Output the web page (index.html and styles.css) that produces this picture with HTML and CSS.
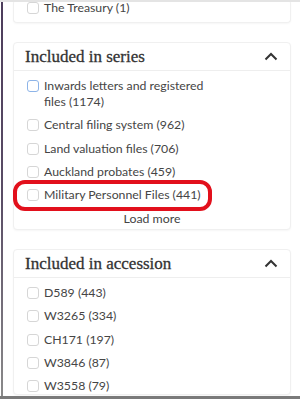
FILE: index.html
```html
<!DOCTYPE html>
<html>
<head>
<meta charset="utf-8">
<link rel="stylesheet" href="styles.css">
</head>
<body>
<div class="frame">
  <div class="edge"></div>
  <main class="page">
    <section class="card card-top">
      <ul class="list">
        <li class="item"><span class="box"></span><span>The Treasury (1)</span></li>
      </ul>
    </section>

    <section class="card">
      <header class="card-head">
        <h2>Included in series</h2>
        <svg class="chev" width="14" height="9" viewBox="0 0 14 9"><path d="M1.5 7.5 L7 2 L12.5 7.5" fill="none" stroke="#333" stroke-width="2"/></svg>
      </header>
      <ul class="list">
        <li class="item"><span class="box focus"></span><span>Inwards letters and registered files (1174)</span></li>
        <li class="item"><span class="box"></span><span>Central filing system (962)</span></li>
        <li class="item"><span class="box"></span><span>Land valuation files (706)</span></li>
        <li class="item"><span class="box"></span><span>Auckland probates (459)</span></li>
        <li class="item marked"><span class="box"></span><span>Military Personnel Files (441)</span></li>
      </ul>
      <div class="more">Load more</div>
    </section>

    <section class="card">
      <header class="card-head">
        <h2>Included in accession</h2>
        <svg class="chev" width="14" height="9" viewBox="0 0 14 9"><path d="M1.5 7.5 L7 2 L12.5 7.5" fill="none" stroke="#333" stroke-width="2"/></svg>
      </header>
      <ul class="list">
        <li class="item"><span class="box"></span><span>D589 (443)</span></li>
        <li class="item"><span class="box"></span><span>W3265 (334)</span></li>
        <li class="item"><span class="box"></span><span>CH171 (197)</span></li>
        <li class="item"><span class="box"></span><span>W3846 (87)</span></li>
        <li class="item"><span class="box"></span><span>W3558 (79)</span></li>
      </ul>
    </section>
  </main>
</div>
<div class="bottom-bar"></div>
</body>
</html>
```

FILE: styles.css
```css
html, body {
  margin: 0;
  padding: 0;
  background: #fff;
  height: 399px;
  overflow: hidden;
}
body {
  display: flex;
  flex-direction: column;
  border-top: 2px solid #e4e4e4;
  box-sizing: border-box;
  font-family: "Lato", "Liberation Sans", sans-serif;
}
.frame {
  flex: 1;
  display: flex;
  min-height: 0;
  overflow: hidden;
}
.edge {
  width: 2px;
  margin-left: 1px;
  background: linear-gradient(#4d3d5c 0%, #5a4d66 50%, #8a8a8a 100%);
}
.page {
  flex: 1;
  padding: 0 9px 0 10px;
  display: flex;
  flex-direction: column;
  gap: 19px;
}
.bottom-bar {
  height: 3px;
  background: #7a7a7a;
}
.card {
  border: 1px solid #f0f0f0;
  border-radius: 4px;
  box-shadow: 0 1px 2px rgba(0,0,0,0.04);
  background: #fff;
}
.card-top {
  margin-top: -2px;
  border-top: none;
}
.card-head {
  height: 27px;
  display: flex;
  align-items: center;
  justify-content: space-between;
  padding: 0 12px 0 11px;
  border-bottom: 1px solid #eeeeee;
}
.card-head h2 {
  margin: 0;
  font-family: "Liberation Serif", "DejaVu Serif", serif;
  font-weight: normal;
  font-size: 17px;
  color: #333;
  -webkit-text-stroke: 0.3px #333;
}
.chev {
  display: block;
}
.list {
  list-style: none;
  margin: 0;
  padding: 7px 80px 0 13px;
  display: flex;
  flex-direction: column;
  gap: 7.3px;
}
.card-top .list {
  padding-top: 0;
  padding-bottom: 6px;
}
.item {
  display: flex;
  align-items: flex-start;
  gap: 5px;
  font-size: 12.3px;
  line-height: 16px;
  color: #454545;
  position: relative;
}
.box {
  flex: none;
  width: 10px;
  height: 10px;
  margin-top: 2px;
  border: 1px solid #d6d6d6;
  border-radius: 3px;
}
.box.focus {
  border: 1.5px solid #8db4e8;
  width: 10px;
  height: 10px;
  margin-top: 1.5px;
}
.item.marked::after {
  content: "";
  position: absolute;
  left: -14px;
  top: -7px;
  width: 191px;
  height: 23px;
  border: 4.5px solid #e2101c;
  border-radius: 12px;
}
.more {
  text-align: center;
  font-size: 12.3px;
  line-height: 16px;
  color: #444;
  padding: 8px 0 2px;
}
```
